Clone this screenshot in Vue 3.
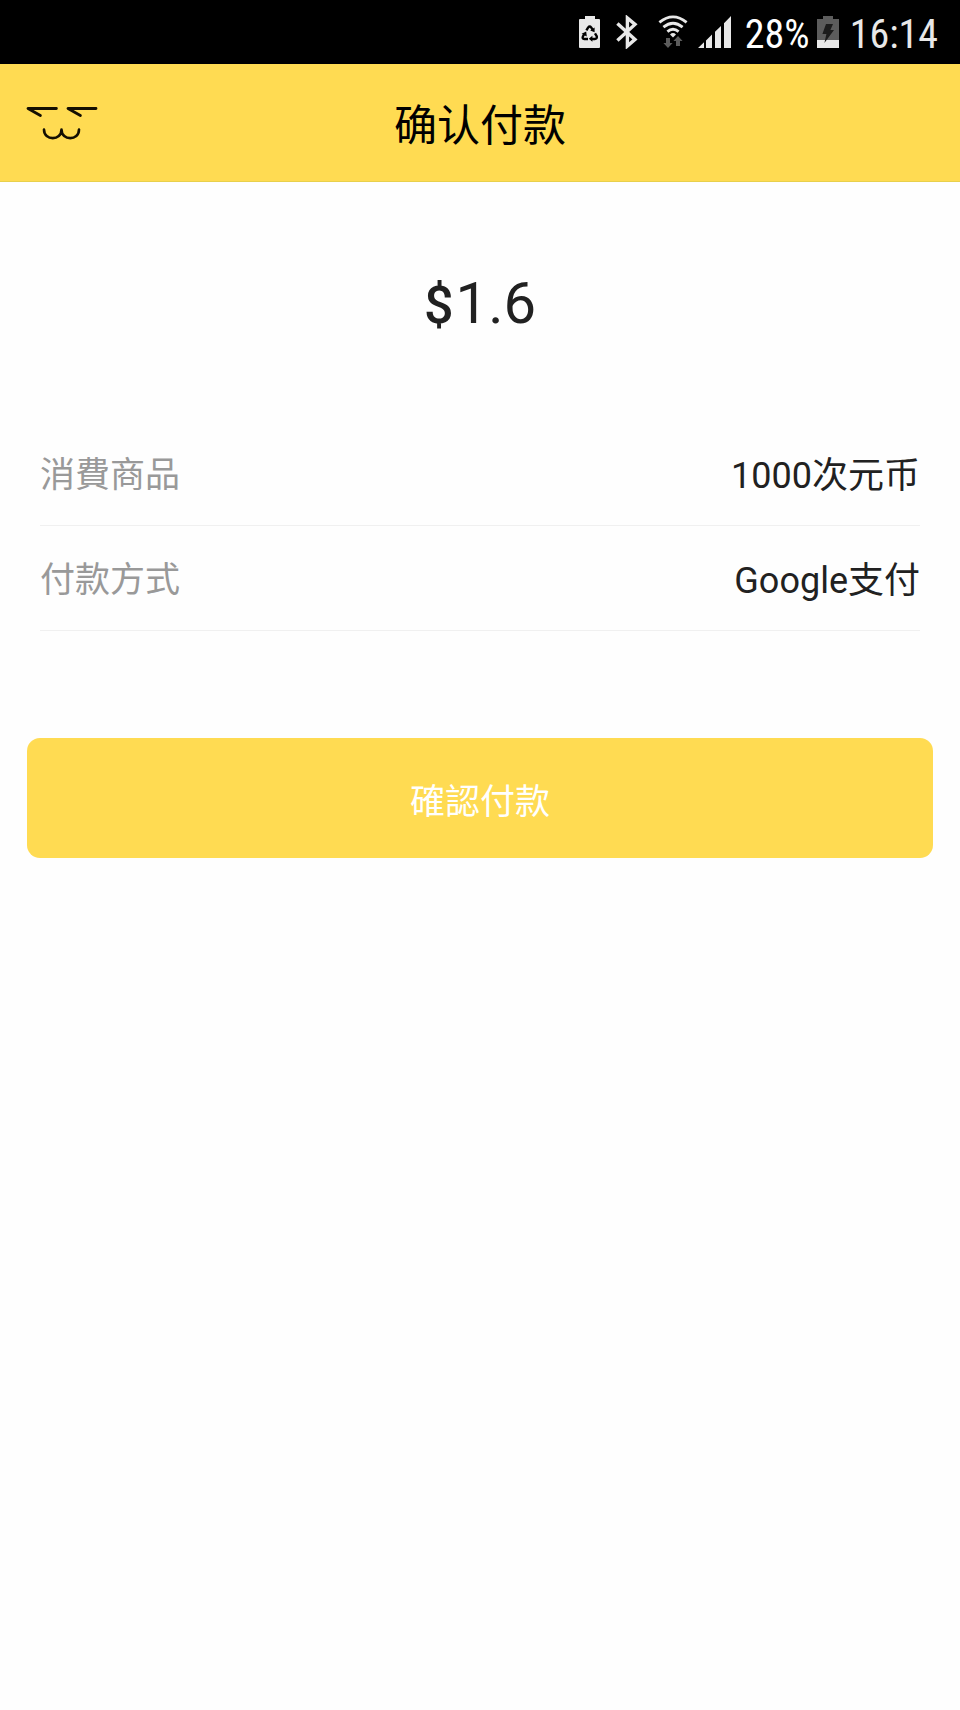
<!-- State/Logic -->
<script setup>
    import { ref } from 'vue';

    const currency = ref('$');
    const price = ref('1.6');
    const battery = ref('28%');
    const time = ref('16:14');

    const rows = [
        { label: '消費商品', value: '1000次元币' },
        { label: '付款方式', value: 'Google支付' }
    ];

    const emit = defineEmits(['back', 'confirm']);
</script>

<!-- View Template -->
<template>
    <div class="page">
        <div class="status-bar">
            <svg class="icon-recycle" width="22" height="34" viewBox="0 0 22 34">
                <path fill="#e8e8e8" d="M6 1h10v3h4q1 0 1 1v27q0 1-1 1H1q-1 0-1-1V5q0-1 1-1h5z" />
                <g fill="none" stroke="#000" stroke-width="2.4">
                    <path d="M7.4 15.4 9.2 12.4Q10.7 10.6 12.2 12.4L13.6 14.6" />
                    <path d="M16 18.4 17.8 21.4Q18.2 24 15.8 24H12.8" />
                    <path d="M9 24H5.4Q2.8 23.6 4 21.2L5.4 18.8" />
                </g>
                <path d="M15.6 12.4v4.8l-4.4-1.8zM13.4 20.8v6l-3.6-3zM2.6 18.8l4.6-2.2.6 4.8z" />
            </svg>
            <svg class="icon-bluetooth" width="22" height="34" viewBox="0 0 22 34">
                <path fill="none" stroke="#e8e8e8" stroke-width="3.4" d="M1.4 8.4 19 24.4 11.4 31V3L19 9.4 1.4 25.6" />
            </svg>
            <svg class="icon-wifi" width="30" height="34" viewBox="0 0 30 34">
                <g fill="none" stroke="#e8e8e8" stroke-width="2.8">
                    <path d="M1.4 7.4Q15-3.6 28.6 7.4" />
                    <path d="M5.4 12.2Q15 4.4 24.6 12.2" />
                    <path d="M9.4 16.6Q15 12 20.6 16.6" />
                </g>
                <path fill="#e8e8e8" d="M12 19.4Q15 16.6 18 19.4L15 22.6z" />
                <path fill="#5c5c5c" d="M8 23h4v5h2.6L10 33l-4.6-5H8zM18 31h4v-5h2.6L20 21l-4.6 5H18z" />
            </svg>
            <svg class="icon-signal" width="34" height="34" viewBox="0 0 34 34">
                <path fill="#e8e8e8" d="M0 33 6 27.2V33zM8 25.4l6-5.8V33H8zM17 16.8l6-5.8v22h-6zM26 8.2l7-7.2v32h-7z" />
            </svg>
            <span class="status-text">{{ battery }}</span>
            <svg class="icon-battery" width="22" height="34" viewBox="0 0 22 34">
                <path fill="#5c5c5c" d="M6 1h10v3h6v21H0V4h6z" />
                <path fill="#e8e8e8" d="M0 25h22v8H0z" />
                <path fill="#1c1c1c" d="M9 9h7l-2.6 6H17L7.4 28l2-9H5.4z" />
            </svg>
            <time class="status-text time">{{ time }}</time>
        </div>

        <header class="nav">
            <button type="button" class="btn-back" aria-label="返回" @click="emit('back')">
                <svg width="72" height="36" viewBox="0 0 72 36">
                    <g fill="none" stroke="#140f02" stroke-linecap="round" stroke-linejoin="round">
                        <path stroke-width="2.8" d="M14.4 10.5 2 3.5H30.4" />
                        <path stroke-width="2.8" d="M54.4 10.5 42 3.5H70" />
                        <path stroke-width="2.6" d="M18 24.5C18 36 35.5 36 35.5 24.5C35.5 36 53 36 53 24.5" />
                    </g>
                </svg>
            </button>
            <h1>确认付款</h1>
        </header>

        <main>
            <p class="price"><span class="currency">{{ currency }}</span>{{ price }}</p>

            <dl class="details">
                <div v-for="row in rows" :key="row.label" class="row">
                    <dt>{{ row.label }}</dt>
                    <dd>{{ row.value }}</dd>
                </div>
            </dl>

            <button type="button" class="btn-confirm" @click="emit('confirm')">確認付款</button>
        </main>
    </div>
</template>

<!-- Styles -->
<style>
    body {
        margin: 0;
        background-color: #fefefe;
    }
</style>

<style scoped>
    .page {
        min-height: 100vh;
        background-color: #fefefe;
        color: #212121;
        font-family: Roboto, "Noto Sans CJK SC", sans-serif;
    }

    .status-bar {
        display: flex;
        align-items: center;
        justify-content: flex-end;
        height: 64px;
        padding-right: 22px;
        background-color: #000;
        color: #fff;
        font-family: "Roboto Condensed", "Liberation Sans Narrow", Roboto, sans-serif;
        font-size: 40px;
        line-height: 58px;
    }

    .status-bar svg {
        flex: none;
    }

    .status-text {
        padding-top: 6px;
    }

    .icon-recycle {
        margin-right: 15px;
    }

    .icon-bluetooth {
        margin-right: 20px;
    }

    .icon-wifi {
        margin-right: 10px;
    }

    .icon-signal {
        margin-right: 13px;
    }

    .icon-battery {
        margin: 0 11px 0 7px;
    }

    .time {
        color: #e8e8e8;
    }

    .nav {
        display: grid;
        grid-template-columns: 1fr auto 1fr;
        align-items: center;
        height: 118px;
        box-sizing: border-box;
        padding: 0 26px;
        border-bottom: 1px solid #e8d04c;
        background-color: #ffdb52;
    }

    .nav h1 {
        margin: 0;
        padding-top: 6px;
        color: #000;
        font-size: 43px;
        font-weight: 400;
        line-height: 64px;
    }

    .btn-back {
        justify-self: start;
        padding: 0;
        border: 0;
        background: none;
        cursor: pointer;
    }

    .btn-back svg {
        display: block;
    }

    .price {
        display: flex;
        justify-content: center;
        align-items: baseline;
        gap: 2px;
        margin: 0;
        padding: 86px 0 80px;
        font-size: 58px;
        line-height: 70px;
    }

    .currency {
        font-size: 52px;
        font-weight: 500;
    }

    .details {
        margin: 0 40px;
    }

    .row {
        display: flex;
        justify-content: space-between;
        align-items: center;
        box-sizing: border-box;
        height: 105px;
        padding-top: 6px;
        border-bottom: 1px solid #f0f0f0;
        font-size: 36px;
        line-height: 52px;
    }

    .row dt {
        color: #999;
        font-size: 35px;
    }

    .row dd {
        margin: 0;
    }

    .btn-confirm {
        display: block;
        width: calc(100% - 54px);
        height: 120px;
        margin: 107px 27px 0;
        padding: 0;
        border: 0;
        border-radius: 13px;
        background-color: #ffdb52;
        color: #fff;
        font-family: inherit;
        font-size: 35px;
        cursor: pointer;
    }
</style>
